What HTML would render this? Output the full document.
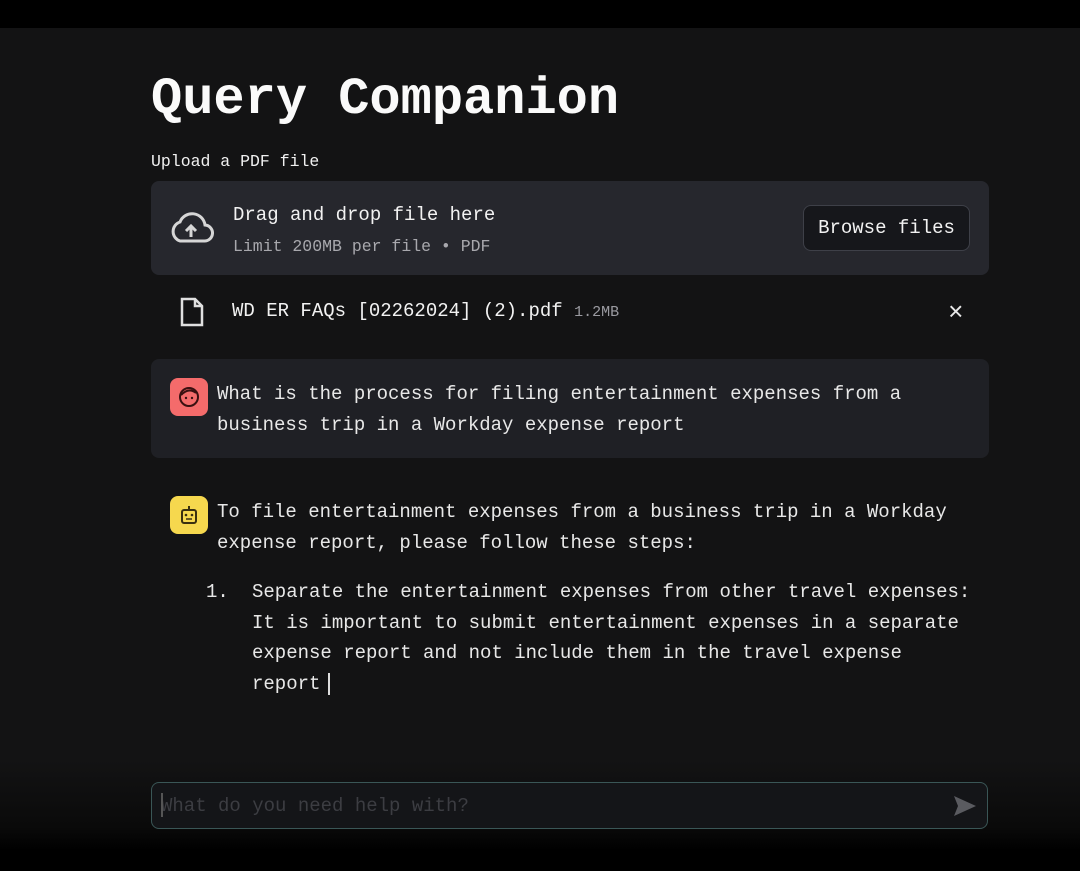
<!DOCTYPE html>
<html><head><meta charset="utf-8"><style>
html,body{margin:0;padding:0}
body{width:1080px;height:871px;background:#131314;position:relative;overflow:hidden;font-family:"Liberation Mono",monospace;color:#e8e8e8}
.top{position:absolute;left:0;top:0;width:1080px;height:28px;background:#000}
.bot{position:absolute;left:0;top:760px;width:1080px;height:111px;background:linear-gradient(#131314,#0a0a0a 60%,#000 82%)}
.abs{position:absolute;white-space:pre}
h1{position:absolute;left:151px;top:70px;margin:0;font-size:52px;font-weight:bold;color:#fafafa;letter-spacing:0}
.drop{position:absolute;left:151px;top:181px;width:838px;height:94px;background:#26272d;border-radius:8px}
.btn{position:absolute;left:803px;top:205px;width:165px;height:44px;border:1px solid #3e4048;border-radius:8px;background:#16171b;font-size:19px;line-height:44px;text-align:center;color:#f2f2f2}
.msg{position:absolute;left:151px;top:359px;width:838px;height:99px;background:#1f2025;border-radius:8px}
.av{position:absolute;width:38px;height:38px;border-radius:8px}
.t{font-size:19px;line-height:30.5px}
.inp{position:absolute;left:151px;top:782px;width:835px;height:45px;border:1.5px solid #3a5656;border-radius:8px;background:#141518}
</style></head><body>
<div class="top"></div>
<div class="bot"></div>
<h1>Query Companion</h1>
<div class="abs" style="left:151px;top:152px;font-size:16.5px;color:#f0f0f0">Upload a PDF file</div>
<div class="drop"></div>
<svg class="abs" style="left:168px;top:211px" width="46" height="34" viewBox="0 0 46 34"><path d="M12 30 H36 a8 8 0 0 0 1-16 A13 13 0 0 0 12 11 A10 10 0 0 0 12 30 Z" fill="none" stroke="#d6d6d6" stroke-width="3"/><path d="M23 26 V16 M18 20 L23 15 L28 20" stroke="#d6d6d6" stroke-width="3" fill="none"/></svg>
<div class="abs" style="left:233px;top:204px;font-size:19px;color:#f2f2f2">Drag and drop file here</div>
<div class="abs" style="left:233px;top:237px;font-size:16.5px;color:#a8a8ad">Limit 200MB per file • PDF</div>
<div class="btn">Browse files</div>
<svg class="abs" style="left:179px;top:297px" width="26" height="30" viewBox="0 0 26 30"><path d="M3 2 H16 L23 9 V28 H3 Z M16 2 V9 H23" fill="none" stroke="#e0e0e0" stroke-width="2.5"/></svg>
<div class="abs" style="left:232px;top:300px;font-size:19px;color:#f2f2f2">WD ER FAQs [02262024] (2).pdf <span style="font-size:15px;color:#9a9aa0">1.2MB</span></div>
<div class="abs" style="left:948px;top:298px;font-size:26px;color:#e8e8e8">×</div>
<div class="msg"></div>
<div class="av" style="left:170px;top:378px;background:#f46b6b"><svg width="38" height="38" viewBox="0 0 38 38"><circle cx="19" cy="19" r="9" fill="none" stroke="#3a1010" stroke-width="2"/><path d="M11 17 Q19 9 26 15" fill="none" stroke="#3a1010" stroke-width="2"/><circle cx="16" cy="20" r="1.2" fill="#3a1010"/><circle cx="22" cy="20" r="1.2" fill="#3a1010"/></svg></div>
<div class="abs t" style="left:217px;top:379px">What is the process for filing entertainment expenses from a
business trip in a Workday expense report</div>
<div class="av" style="left:170px;top:496px;background:#f6d84e"><svg width="38" height="38" viewBox="0 0 38 38"><rect x="12" y="14" width="14" height="13" rx="2" fill="none" stroke="#3a3010" stroke-width="2"/><path d="M19 10 V14" stroke="#3a3010" stroke-width="2"/><circle cx="16" cy="19" r="1.3" fill="#3a3010"/><circle cx="22" cy="19" r="1.3" fill="#3a3010"/><path d="M16 23 H22" stroke="#3a3010" stroke-width="1.5"/></svg></div>
<div class="abs t" style="left:217px;top:497px">To file entertainment expenses from a business trip in a Workday
expense report, please follow these steps:</div>
<div class="abs t" style="left:206px;top:577px">1.</div>
<div class="abs t" style="left:252px;top:577px">Separate the entertainment expenses from other travel expenses:
It is important to submit entertainment expenses in a separate
expense report and not include them in the travel expense
report<span style="border-left:2px solid #ddd;margin-left:8px"></span></div>
<div class="inp"></div>
<div class="abs" style="left:161px;top:795px;font-size:19px;color:#3c3d42">What do you need help with?</div>
<div class="abs" style="left:161px;top:793px;width:2px;height:24px;background:#555"></div>
<svg class="abs" style="left:953px;top:795px" width="24" height="22" viewBox="0 0 24 22"><path d="M1 1 L23 11 L1 21 L5 11 Z" fill="#5a5b60"/></svg>
</body></html>
